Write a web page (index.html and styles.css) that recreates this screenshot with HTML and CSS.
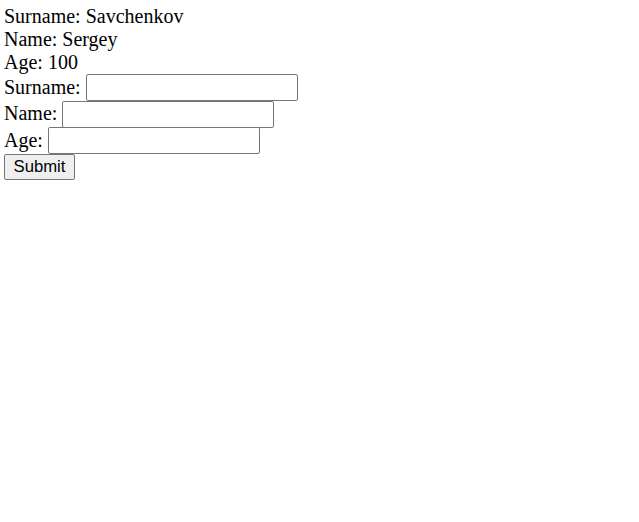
FILE: index.html
```html
<!DOCTYPE html>
<html>
<head>
<meta charset="utf-8">
<link rel="stylesheet" href="styles.css">
</head>
<body>
<div class="info">Surname: Savchenkov</div>
<div class="info">Name: Sergey</div>
<div class="info">Age: 100</div>
<form class="form">
  <div class="row row-a"><label>Surname:</label><input type="text"></div>
  <div class="row row-b"><label>Name:</label><input type="text"></div>
  <div class="row row-a"><label>Age:</label><input type="text"></div>
  <div class="row-btn"><button type="button">Submit</button></div>
</form>
</body>
</html>
```
FILE: styles.css
```css
html, body {
  margin: 0;
  background: #fff;
}
body {
  padding: 5px 4px;
  font-family: "Liberation Serif", "Times New Roman", serif;
  font-size: 20px;
  line-height: 23px;
  color: #000;
}
.info {
  height: 23px;
}
.form {
  margin: 0;
}
.row {
  display: flex;
  align-items: center;
  gap: 5px;
}
.row-a { height: 27px; }
.row-b { height: 26px; }
.row label {
  padding-bottom: 1px;
}
.row input {
  box-sizing: border-box;
  width: 212px;
  height: 27px;
  border: 1px solid #767676;
  border-radius: 2px;
  padding: 1px 2px;
  font: 16px "Liberation Sans", Arial, sans-serif;
  background: #fff;
  margin: 0;
}
.row-b input { height: 27px; }
.row-btn {
  height: 26px;
}
.row-btn button {
  box-sizing: border-box;
  width: 71px;
  height: 26px;
  margin: 0;
  padding: 0;
  border: 1px solid #767676;
  border-radius: 2px;
  background: #efefef;
  font: 16.7px "Liberation Sans", Arial, sans-serif;
  color: #000;
}
```
